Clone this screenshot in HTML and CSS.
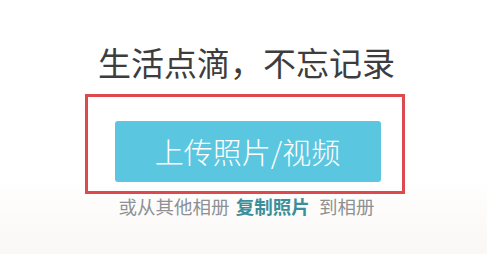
FILE: index.html
```html
<!DOCTYPE html>
<html lang="zh-CN">
<head>
<meta charset="utf-8">
<title>上传照片</title>
<link rel="stylesheet" href="styles.css">
</head>
<body>
<main class="page">
  <h1 class="title">生活点滴，不忘记录</h1>
  <div class="highlight">
    <button class="upload-btn" type="button">上传照片/视频</button>
  </div>
  <p class="hint">或从其他相册 <a class="link" href="#">复制照片</a> 到相册</p>
</main>
</body>
</html>
```
FILE: styles.css
```css
html, body {
  margin: 0;
  padding: 0;
}
body {
  width: 487px;
  height: 254px;
  overflow: hidden;
  background: linear-gradient(to bottom, #ffffff 0%, #ffffff 70%, #faf7f5 100%);
  font-family: "Noto Sans CJK SC", "Noto Sans", sans-serif;
}
.page {
  display: flex;
  flex-direction: column;
  align-items: center;
  padding-top: 46px;
  padding-left: 2px;
}
.title {
  margin: 0;
  font-size: 33px;
  line-height: 33px;
  font-weight: 400;
  color: #3d3d3d;
  padding-left: 4px;
}
.highlight {
  margin-top: 15px;
  box-sizing: border-box;
  width: 320px;
  height: 100px;
  border: 3px solid #dc4a50;
  padding: 24px 0 0 0;
  display: flex;
  justify-content: center;
  align-items: flex-start;
}
.upload-btn {
  margin-left: 6px;
  width: 266px;
  height: 61px;
  border: none;
  border-radius: 3px;
  background: #5ac6df;
  color: #ffffff;
  font-family: "Noto Sans CJK SC", "Noto Sans", sans-serif;
  font-size: 29px;
  line-height: 29px;
  font-weight: 300;
  padding: 0;
  cursor: pointer;
}
.hint {
  margin: 3px 0 0 0;
  font-size: 18.5px;
  line-height: 19px;
  color: #8d9194;
  padding-left: 4px;
  white-space: nowrap;
}
.link {
  color: #3b8e9a;
  font-weight: 700;
  text-decoration: none;
  margin: 0 5px 0 2px;
}
```
